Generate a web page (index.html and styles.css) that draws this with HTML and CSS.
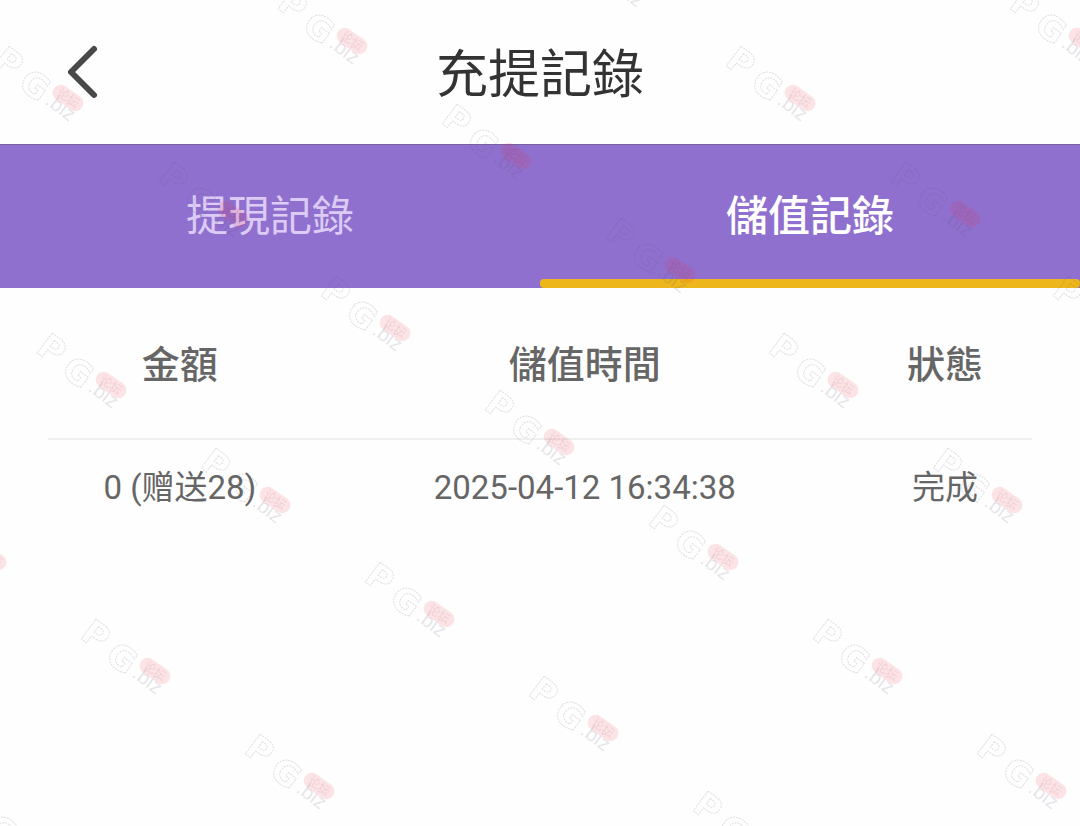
FILE: index.html
```html
<!DOCTYPE html>
<html lang="zh-Hant">
<head>
<meta charset="utf-8">
<meta name="viewport" content="width=device-width, initial-scale=1">
<title>充提記錄</title>
<link rel="stylesheet" href="styles.css">
</head>
<body>
<header class="topbar">
  <button class="back" type="button" aria-label="返回">
    <svg viewBox="0 0 36 56" aria-hidden="true"><path d="M30 5 7 28 30 51"/></svg>
  </button>
  <h1 class="title">充提記錄</h1>
</header>
<nav class="tabs" role="tablist">
  <button class="tab" type="button" role="tab" aria-selected="false">提現記錄</button>
  <button class="tab tab-active" type="button" role="tab" aria-selected="true">儲值記錄</button>
</nav>
<main class="content">
  <table class="records">
    <colgroup><col class="col-amount"><col class="col-time"><col class="col-state"></colgroup>
    <thead><tr><th scope="col">金額</th><th scope="col">儲值時間</th><th scope="col">狀態</th></tr></thead>
    <tbody><tr><td>0 (<span lang="zh-Hans">赠送</span>28)</td><td>2025-04-12 16:34:38</td><td>完成</td></tr></tbody>
  </table>
</main>
<svg class="watermarks" aria-hidden="true">
  <defs>
    <g id="mark">
      <g class="mark-letters">
        <text transform="translate(19 16) rotate(37)" y="12">P</text>
        <text transform="translate(45 39) rotate(37)" y="12">G</text>
      </g>
      <text class="mark-domain" transform="translate(71 61) rotate(37)" y="7">.biz</text>
      <g transform="translate(78 52) rotate(35)">
        <rect class="mark-pill" x="-17" y="-8" width="34" height="16" rx="8"/>
        <text class="mark-forum" y="4">论坛</text>
      </g>
    </g>
  </defs>
  <use href="#mark" x="558" y="-68"/>
  <use href="#mark" x="274" y="-11"/>
  <use href="#mark" x="1006" y="-11"/>
  <use href="#mark" x="-10" y="46"/>
  <use href="#mark" x="722" y="46"/>
  <use href="#mark" x="438" y="104"/>
  <use href="#mark" x="155" y="162"/>
  <use href="#mark" x="887" y="162"/>
  <use href="#mark" x="602" y="218"/>
  <use href="#mark" x="317" y="276"/>
  <use href="#mark" x="1049" y="276"/>
  <use href="#mark" x="33" y="333"/>
  <use href="#mark" x="765" y="333"/>
  <use href="#mark" x="481" y="390"/>
  <use href="#mark" x="197" y="448"/>
  <use href="#mark" x="929" y="448"/>
  <use href="#mark" x="-87" y="505"/>
  <use href="#mark" x="645" y="505"/>
  <use href="#mark" x="361" y="562"/>
  <use href="#mark" x="77" y="619"/>
  <use href="#mark" x="809" y="619"/>
  <use href="#mark" x="525" y="676"/>
  <use href="#mark" x="241" y="734"/>
  <use href="#mark" x="973" y="734"/>
  <use href="#mark" x="-43" y="791"/>
  <use href="#mark" x="689" y="791"/>
</svg>
</body>
</html>
```

FILE: styles.css
```css
* { box-sizing: border-box; }

body {
  margin: 0;
  min-height: 100vh;
  background: #fefefe;
  color: #666;
  font-family: Roboto, "Noto Sans CJK TC", sans-serif;
}

button {
  border: 0;
  padding: 0;
  background: none;
  font: inherit;
  cursor: pointer;
}

.topbar {
  display: grid;
  grid-template-columns: 96px 1fr 96px;
  align-items: center;
  height: 144px;
  padding: 0 12px;
}

.back {
  display: flex;
  justify-content: flex-end;
  padding-right: 8px;
}

.back svg {
  width: 36px;
  height: 56px;
  fill: none;
  stroke: #484848;
  stroke-width: 6;
  stroke-linecap: round;
  stroke-linejoin: round;
}

.title {
  margin: 0;
  padding-top: 8px;
  color: #333;
  font-size: 52px;
  font-weight: 400;
  line-height: 72px;
  text-align: center;
}

.tabs {
  display: grid;
  grid-template-columns: 1fr 1fr;
  height: 144px;
  border-top: 1px solid #78619f;
  background: #9070ce;
}

.tab {
  position: relative;
  color: #dccbf5;
  font-size: 42px;
  line-height: 60px;
}

.tab-active {
  color: #fff;
  font-weight: 500;
}

.tab-active::after {
  content: "";
  position: absolute;
  left: 0;
  right: 0;
  bottom: 0;
  height: 9px;
  border-radius: 4px;
  background: #edb71b;
}

.content { padding: 0 48px; }

.records {
  width: 100%;
  table-layout: fixed;
  border-collapse: collapse;
  text-align: center;
}

.col-amount { width: 26.8%; }
.col-time { width: 55.5%; }
.col-state { width: 17.7%; }

.records th {
  padding: 50px 0 45px;
  border-bottom: 2px solid #f0f0f0;
  font-size: 38px;
  font-weight: 500;
  line-height: 55px;
}

.records td {
  padding: 24px 0;
  font-size: 33px;
  line-height: 48px;
  vertical-align: baseline;
  white-space: nowrap;
}

.records [lang="zh-Hans"] {
  font-family: "Noto Sans CJK SC", sans-serif;
  line-height: 1;
}

.watermarks {
  position: fixed;
  inset: 0;
  width: 100%;
  height: 100%;
  pointer-events: none;
  text-anchor: middle;
}

.mark-letters {
  fill: none;
  stroke: rgba(90, 80, 110, 0.18);
  stroke-width: 1;
  stroke-dasharray: 2 1;
  font: 700 34px "DejaVu Sans", sans-serif;
}

.mark-domain {
  fill: rgba(90, 80, 110, 0.14);
  font: 400 20px "Liberation Sans", sans-serif;
}

.mark-pill { fill: rgba(240, 40, 60, 0.12); }

.mark-forum {
  fill: rgba(130, 50, 60, 0.12);
  font: 400 12px "Noto Sans CJK SC", sans-serif;
}
```
